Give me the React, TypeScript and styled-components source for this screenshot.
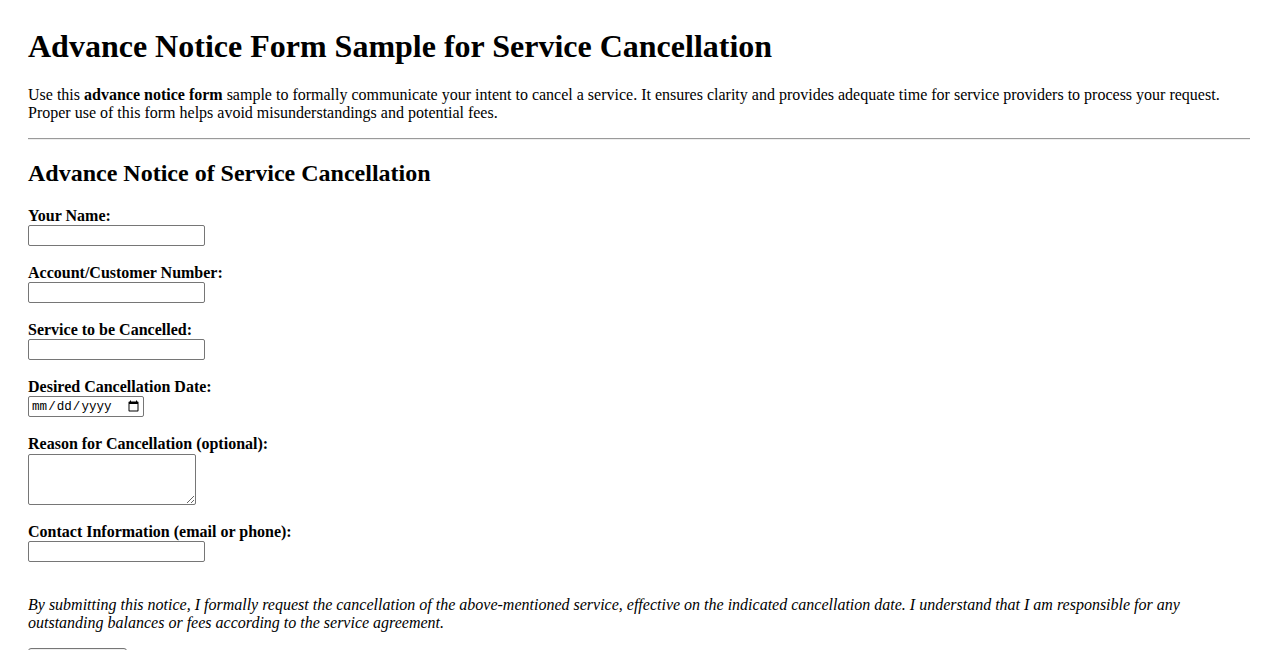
import React from 'react';
import styled, { createGlobalStyle } from 'styled-components';

const GlobalStyle = createGlobalStyle`
  html, body {
    margin: 0;
    padding: 0;
    background: #ffffff;
  }
  body {
    font-family: "Liberation Serif", "Times New Roman", serif;
    font-size: 16px;
    color: #000000;
  }
`;

const Page = styled.div`
  padding: 28px 28px 40px;
`;

const Title = styled.h1`
  font-size: 32px;
  font-weight: bold;
  line-height: normal;
  margin: 0 0 21.44px;
`;

const Intro = styled.p`
  margin: 0 0 16px;
  line-height: normal;
`;

const Rule = styled.hr`
  margin: 8px 0;
  border: 0;
  border-top: 1px solid #9a9a9a;
  border-bottom: 1px solid #eeeeee;
  height: 0;
`;

const SectionTitle = styled.h2`
  font-size: 24px;
  font-weight: bold;
  line-height: normal;
  margin: 19.92px 0;
`;

const Form = styled.form`
  display: flex;
  flex-direction: column;
  align-items: flex-start;
  gap: 18px;
`;

const Field = styled.div`
  display: flex;
  flex-direction: column;
  align-items: flex-start;
`;

const Label = styled.label`
  font-weight: bold;
  line-height: normal;
`;

const TextInput = styled.input`
  box-sizing: border-box;
  width: 177px;
  height: 21px;
  margin: 0;
  padding: 1px 2px;
  border: 1px solid #767676;
  border-radius: 2px;
  font-family: "Liberation Sans", Arial, sans-serif;
  font-size: 13.33px;
  background: #ffffff;
`;

const DateInput = styled(TextInput)`
  width: 116px;
  font-family: "Liberation Mono", "DejaVu Sans Mono", monospace;
  font-size: 12.6px;
  padding: 1px 1px 1px 2px;
  color: #000000;
`;

const TextArea = styled.textarea`
  box-sizing: border-box;
  width: 168px;
  height: 51px;
  margin: 1px 0 0;
  padding: 2px;
  border: 1px solid #767676;
  border-radius: 2px;
  font-family: "Liberation Mono", monospace;
  font-size: 13.33px;
`;

const Note = styled.p`
  margin: 34px 0 16px;
  font-style: italic;
  line-height: normal;
`;

const SubmitButton = styled.button`
  box-sizing: border-box;
  width: 99px;
  height: 22px;
  margin: 0;
  padding: 1px 6px;
  border: 1px solid #767676;
  border-radius: 3px;
  background: #efefef;
  font-family: "Liberation Sans", Arial, sans-serif;
  font-size: 13.33px;
`;

const fields = [
  { id: 'name', label: 'Your Name:' },
  { id: 'account', label: 'Account/Customer Number:' },
  { id: 'service', label: 'Service to be Cancelled:' },
];

export default function App() {
  return (
    <>
      <GlobalStyle />
      <Page>
        <Title>Advance Notice Form Sample for Service Cancellation</Title>
        <Intro>
          Use this <strong>advance notice form</strong> sample to formally communicate your intent to cancel a
          service. It ensures clarity and provides adequate time for service providers to process your request.
          Proper use of this form helps avoid misunderstandings and potential fees.
        </Intro>
        <Rule />
        <SectionTitle>Advance Notice of Service Cancellation</SectionTitle>
        <Form onSubmit={(e) => e.preventDefault()}>
          {fields.map((f) => (
            <Field key={f.id}>
              <Label htmlFor={f.id}>{f.label}</Label>
              <TextInput id={f.id} type="text" />
            </Field>
          ))}
          <Field>
            <Label htmlFor="date">Desired Cancellation Date:</Label>
            <DateInput id="date" type="date" />
          </Field>
          <Field>
            <Label htmlFor="reason">Reason for Cancellation (optional):</Label>
            <TextArea id="reason" />
          </Field>
          <Field>
            <Label htmlFor="contact">Contact Information (email or phone):</Label>
            <TextInput id="contact" type="text" />
          </Field>
        </Form>
        <Note>
          By submitting this notice, I formally request the cancellation of the above-mentioned service, effective
          on the indicated cancellation date. I understand that I am responsible for any outstanding balances or
          fees according to the service agreement.
        </Note>
        <SubmitButton type="submit">Submit Notice</SubmitButton>
      </Page>
    </>
  );
}
